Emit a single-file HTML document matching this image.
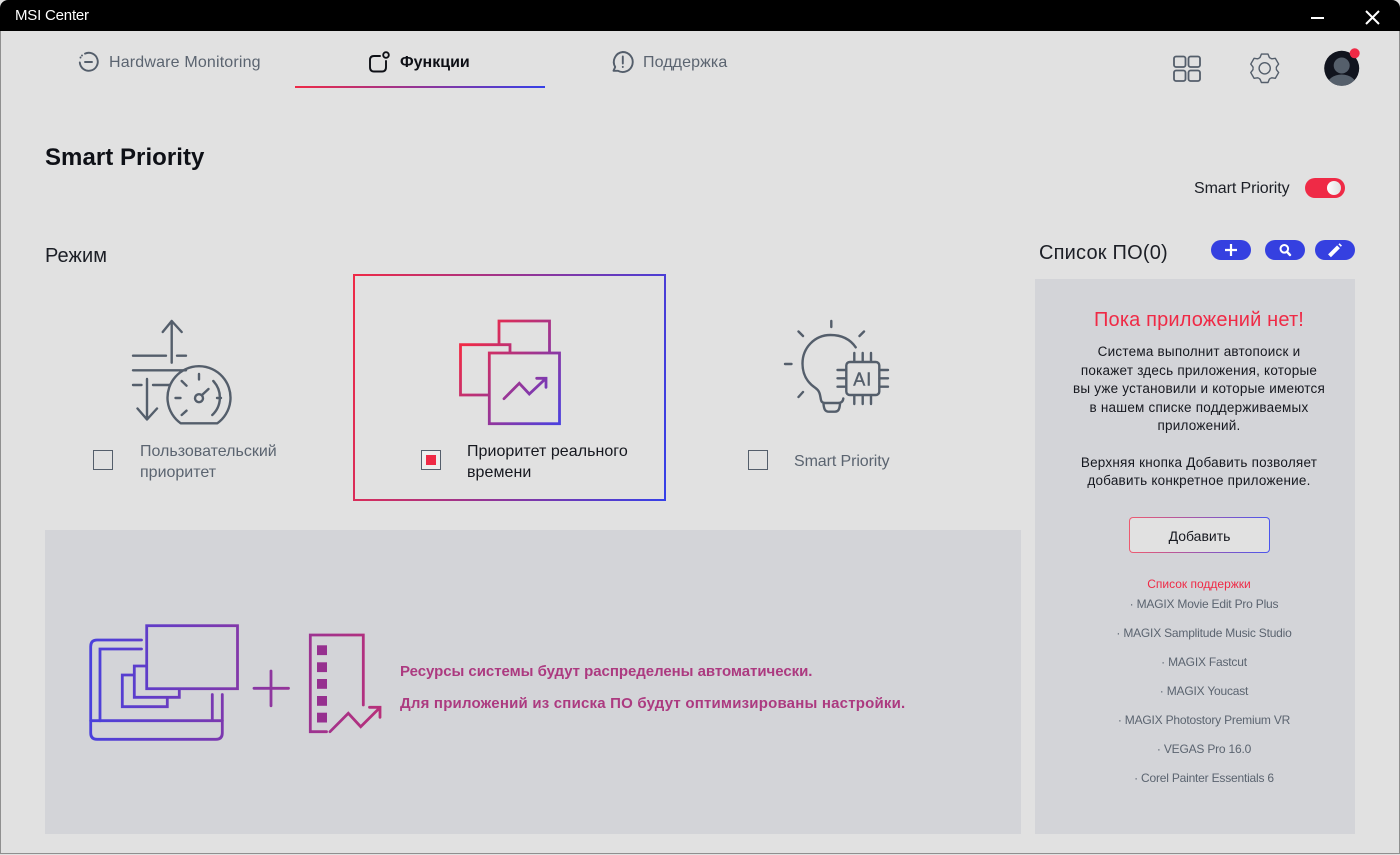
<!DOCTYPE html>
<html lang="ru">
<head>
<meta charset="utf-8">
<title>MSI Center</title>
<style>
html,body{margin:0;padding:0;width:1400px;height:855px;overflow:hidden;background:#e1e1e1}
body{position:relative;font-family:"Liberation Sans","Noto Sans CJK SC",sans-serif;color:#16181f}
.t{position:absolute;white-space:nowrap;line-height:24px;height:24px}
.c{text-align:center}
.b{position:absolute}
svg{position:absolute;left:0;top:0}
.p{font-size:13.5px;letter-spacing:.22px;left:1035px;width:328px;color:#16181f}
.l{font-size:12px;letter-spacing:-.2px;color:#5b6470;left:1040px;width:328px}
</style>
</head>
<body>
<div class="b" style="left:0;top:0;width:1400px;height:31px;background:#000;border-radius:8px 8px 0 0"></div>
<div class="b" style="left:0;top:31px;width:1px;height:822px;background:#8f8f8f"></div>
<div class="b" style="left:1399px;top:31px;width:1px;height:822px;background:#8f8f8f"></div>
<div class="b" style="left:0;top:853px;width:1400px;height:1px;background:#8f8f8f"></div>
<div class="t" style="left:15px;top:4px;color:#fff;font-size:15px;letter-spacing:-.2px">MSI Center</div>

<div class="t" style="left:109px;top:51px;font-size:16px;color:#5b6470;letter-spacing:.17px">Hardware Monitoring</div>
<div class="t" style="left:400px;top:51px;font-size:16px;font-weight:bold;color:#0e1016">Функции</div>
<div class="t" style="left:643px;top:51px;font-size:16px;color:#5b6470;letter-spacing:.1px">Поддержка</div>
<div class="b" style="left:295px;top:86px;width:250px;height:2px;background:linear-gradient(90deg,#ef2a46,#3540e8)"></div>

<div class="t" style="left:45px;top:145px;font-size:24px;font-weight:bold;line-height:26px;height:26px;color:#0e1016;letter-spacing:.05px">Smart Priority</div>
<div class="t" style="left:1194px;top:177px;font-size:16px;color:#1c1f26;letter-spacing:-.1px">Smart Priority</div>
<div class="b" style="left:1305px;top:178px;width:40px;height:20px;border-radius:10px;background:#ef2a46"></div>
<div class="b" style="left:1327px;top:181px;width:14px;height:14px;border-radius:50%;background:linear-gradient(90deg,#fff,#e0e0e0)"></div>

<div class="t" style="left:45px;top:244px;font-size:20px;color:#1c1f26;letter-spacing:.1px">Режим</div>
<div class="t" style="left:1039px;top:241px;font-size:20px;color:#1c1f26;letter-spacing:.2px">Список ПО(0)</div>
<div class="b" style="left:1211px;top:240px;width:40px;height:20px;border-radius:10px;background:#3540e0"></div>
<div class="b" style="left:1265px;top:240px;width:40px;height:20px;border-radius:10px;background:#3540e0"></div>
<div class="b" style="left:1315px;top:240px;width:40px;height:20px;border-radius:10px;background:#3540e0"></div>

<div class="b" style="left:1035px;top:279px;width:320px;height:555px;background:#d3d4d8"></div>
<div class="b" style="left:45px;top:530px;width:976px;height:304px;background:#d3d4d8"></div>

<div class="b" style="left:353px;top:274px;width:313px;height:227px;box-sizing:border-box;border:2px solid transparent;background:linear-gradient(#e1e1e1,#e1e1e1) padding-box,linear-gradient(100deg,#ef2a46,#3540e8) border-box"></div>

<div class="b" style="left:93px;top:450px;width:20px;height:20px;box-sizing:border-box;border:1.3px solid #545e6b"></div>
<div class="b" style="left:421px;top:450px;width:20px;height:20px;box-sizing:border-box;border:1.3px solid #545e6b;background:#eee"></div>
<div class="b" style="left:426px;top:455px;width:10px;height:10px;background:#ef2a46"></div>
<div class="b" style="left:748px;top:450px;width:20px;height:20px;box-sizing:border-box;border:1.3px solid #545e6b"></div>

<div class="t" style="left:140px;top:440px;font-size:16px;color:#5b6470">Пользовательский</div>
<div class="t" style="left:140px;top:461px;font-size:16px;color:#5b6470">приоритет</div>
<div class="t" style="left:467px;top:440px;font-size:16px;color:#16181f;letter-spacing:.05px">Приоритет реального</div>
<div class="t" style="left:467px;top:461px;font-size:16px;color:#16181f;letter-spacing:.05px">времени</div>
<div class="t" style="left:794px;top:450px;font-size:16px;color:#5b6470;letter-spacing:-.1px">Smart Priority</div>

<div class="t" style="left:400px;top:660px;font-size:15px;font-weight:bold;color:#ac3a80;letter-spacing:-.04px">Ресурсы системы будут распределены автоматически.</div>
<div class="t" style="left:400px;top:692px;font-size:15px;font-weight:bold;color:#ac3a80;letter-spacing:.2px">Для приложений из списка ПО будут оптимизированы настройки.</div>

<div class="t c" style="left:1035px;width:328px;top:308px;font-size:20px;color:#ef2a46;letter-spacing:.15px">Пока приложений нет!</div>
<div class="t c p" style="top:340px">Система выполнит автопоиск и</div>
<div class="t c p" style="top:359px">покажет здесь приложения, которые</div>
<div class="t c p" style="top:377px">вы уже установили и которые имеются</div>
<div class="t c p" style="top:396px">в нашем списке поддерживаемых</div>
<div class="t c p" style="top:414px">приложений.</div>
<div class="t c p" style="top:451px">Верхняя кнопка Добавить позволяет</div>
<div class="t c p" style="top:469px">добавить конкретное приложение.</div>

<div class="b" style="left:1129px;top:517px;width:141px;height:36px;box-sizing:border-box;border:1px solid transparent;border-radius:4px;background:linear-gradient(#e1e1e1,#e1e1e1) padding-box,linear-gradient(90deg,#ef5a70,#4a55ee) border-box"></div>
<div class="t c" style="left:1129px;width:141px;top:524px;font-size:14px">Добавить</div>

<div class="t c" style="left:1035px;width:328px;top:572px;font-size:12px;color:#ef2a46">Список поддержки</div>
<div class="t c l" style="top:592px">· MAGIX Movie Edit Pro Plus</div>
<div class="t c l" style="top:621px">· MAGIX Samplitude Music Studio</div>
<div class="t c l" style="top:650px">· MAGIX Fastcut</div>
<div class="t c l" style="top:679px">· MAGIX Youcast</div>
<div class="t c l" style="top:708px">· MAGIX Photostory Premium VR</div>
<div class="t c l" style="top:737px">· VEGAS Pro 16.0</div>
<div class="t c l" style="top:766px">· Corel Painter Essentials 6</div>

<svg width="1400" height="855" viewBox="0 0 1400 855" fill="none" xmlns="http://www.w3.org/2000/svg">
<defs>
<linearGradient id="g1" gradientUnits="userSpaceOnUse" x1="465" y1="345" x2="560" y2="424"><stop offset="0" stop-color="#ef2a46"/><stop offset="1" stop-color="#4a40e0"/></linearGradient>
<linearGradient id="g2" gradientUnits="userSpaceOnUse" x1="90" y1="680" x2="385" y2="680"><stop offset="0" stop-color="#4a40dc"/><stop offset="1" stop-color="#b92f78"/></linearGradient>
<clipPath id="av"><circle cx="1341.7" cy="68.3" r="17.5"/></clipPath>
</defs>

<!-- window controls -->
<path d="M1311 18H1324" stroke="#fff" stroke-width="2"/>
<path d="M1366 11L1379 24M1379 11L1366 24" stroke="#fff" stroke-width="2"/>

<!-- tab icons -->
<g stroke="#545e6b" stroke-width="1.9" stroke-linecap="round">
<path d="M85 53.6A9 9 0 1 1 79.8 62.5"/>
<path d="M80.5 57.5v.1M82 55.4v.1"/>
<path d="M85 62H92"/>
<path d="M622.8 52A10 10 0 1 1 618 70.8H613.5L615.2 67A10 10 0 0 1 622.8 52Z" stroke-linejoin="round"/>
<path d="M622.8 56.5V63.5M622.8 66.8V67"/>
</g>
<g stroke="#0e1016" stroke-width="1.9" stroke-linecap="round">
<path d="M380 56H374Q370 56 370 60V67Q370 71.5 374 71.5H382Q386 71.5 386 67V61"/>
<circle cx="386" cy="55" r="2.8"/>
</g>

<!-- header right icons -->
<g stroke="#545e6b" stroke-width="1.8">
<rect x="1174" y="56.5" width="11.5" height="10.5" rx="2"/>
<rect x="1188.5" y="56.5" width="11.5" height="10.5" rx="2"/>
<rect x="1174" y="70.5" width="11.5" height="10.5" rx="2"/>
<rect x="1188.5" y="70.5" width="11.5" height="10.5" rx="2"/>
</g>
<g transform="translate(1264.7 68.3)" stroke="#545e6b" stroke-width="1.4" stroke-linejoin="round">
<circle r="5.6"/>
<path d="M-5.75-9.96L-4.6-11L-3.3-14.2L3.3-14.2L4.6-11L5.75-9.96"/>
<path transform="rotate(60)" d="M-5.75-9.96L-4.6-11L-3.3-14.2L3.3-14.2L4.6-11L5.75-9.96"/>
<path transform="rotate(120)" d="M-5.75-9.96L-4.6-11L-3.3-14.2L3.3-14.2L4.6-11L5.75-9.96"/>
<path transform="rotate(180)" d="M-5.75-9.96L-4.6-11L-3.3-14.2L3.3-14.2L4.6-11L5.75-9.96"/>
<path transform="rotate(240)" d="M-5.75-9.96L-4.6-11L-3.3-14.2L3.3-14.2L4.6-11L5.75-9.96"/>
<path transform="rotate(300)" d="M-5.75-9.96L-4.6-11L-3.3-14.2L3.3-14.2L4.6-11L5.75-9.96"/>
</g>
<circle cx="1341.7" cy="68.3" r="17.5" fill="#11141e"/>
<g clip-path="url(#av)" fill="#555f6b">
<circle cx="1341.7" cy="65.5" r="8"/>
<ellipse cx="1341.7" cy="86" rx="15" ry="11.5"/>
</g>
<circle cx="1354.7" cy="53.3" r="5" fill="#ef2a46"/>

<!-- pill icons -->
<path d="M1225 250H1237M1231 244V256" stroke="#fff" stroke-width="2.2"/>
<circle cx="1284.3" cy="248.8" r="3.8" stroke="#fff" stroke-width="2"/>
<path d="M1287 251.8L1290 255" stroke="#fff" stroke-width="2.4" stroke-linecap="round"/>
<path d="M1329.5 255.8L1338.5 246.8" stroke="#fff" stroke-width="4"/>
<path d="M1339.6 245.6L1340.8 244.4" stroke="#fff" stroke-width="3.4"/>

<!-- icon 1 -->
<g stroke="#545e6b" stroke-width="2.4" stroke-linecap="round" stroke-linejoin="round">
<path d="M171.7 321V362.7M162.7 332L171.7 321L181.7 332"/>
<path d="M133 355.7H166M177 355.7H186"/>
<path d="M133 370.3H186"/>
<path d="M133 385H141.5M153 385H170"/>
<path d="M147 379V419.5M137.5 408.5L147 419.5L157 408.5"/>
<path d="M180.7 423.3A31.5 31.5 0 1 1 217.3 423.3Z"/>
<path d="M199 374V379.5M181.7 381L186.5 385.7M175.5 398H180.5M181.7 415L186.5 410.7M217 398H221"/>
<path d="M213.3 381A24 24 0 0 1 212.3 415"/>
<circle cx="199" cy="398.2" r="4"/>
<path d="M202 395L208.5 389"/>
</g>

<!-- icon 2 -->
<g stroke="url(#g1)" stroke-width="2.8" stroke-linecap="square" stroke-linejoin="miter">
<path d="M499 344V321H549.5V352"/>
<path d="M489 395H460.5V344.7H510V352"/>
<rect x="489.3" y="353" width="70.2" height="70.7"/>
<path d="M504 398.7L519.3 383.3L529.3 394L546 378.3M536.7 378.3H546V387.3" stroke-linecap="round"/>
</g>

<!-- icon 3 -->
<g stroke="#545e6b" stroke-width="2.4" stroke-linecap="round" stroke-linejoin="round">
<path d="M831.3 321V327M798.5 331.5L803 336M864 331.5L859.5 336M785 364H791.5M803 392L798.5 397"/>
<path d="M855.7 347.3C850 339 841 335 830.5 335C814.5 335 802.5 348 802.5 363.5C802.5 375 808 383 815.5 388C820.5 391.5 820 396 821 400C821.5 402.5 823 403 825 403H838C841.5 403 843 401.5 843.3 398.5"/>
<path d="M823.5 404C824 409 825 411.7 829 411.7H835C838.5 411.7 839.5 409 840 404"/>
<rect x="846.3" y="362" width="33" height="33" rx="3.5"/>
<path d="M854.3 353V361.5M862.7 353V361.5M871 353V361.5M854.3 395.5V404M862.7 395.5V404M871 395.5V404M837.5 370H846M837.5 378.3H846M837.5 386.7H846M879.5 370H888M879.5 378.3H888M879.5 386.7H888"/>
</g>
<text x="862.7" y="385.5" text-anchor="middle" font-family="Liberation Sans,sans-serif" font-size="18" letter-spacing="1" fill="#545e6b" stroke="#545e6b" stroke-width=".4">AI</text>

<!-- bottom illustration -->
<g stroke="url(#g2)" stroke-width="2.8" stroke-linecap="round">
<rect x="146.7" y="625.7" width="90.8" height="63"/>
<path d="M141.5 640H97Q90.7 640 90.7 646.5V733Q90.7 739.3 97 739.3H216Q222.3 739.3 222.3 733V694.5"/>
<path d="M141.5 649H100V720.7"/>
<path d="M90.7 720.7H222.3M212.3 694.5V720.7"/>
<path d="M146.5 666H134.3V697.3H179.3V689"/>
<path d="M134 675H122.3V706.7H167.3V697.5"/>
<path d="M254 688.3H288.5M271 671V705.7"/>
<path d="M326.5 731.7H310.3V635H363.3V705"/>
<path d="M330 731.7L348.3 713.3L360.7 726.7L380 707.5M369.5 707.3H380V717.3"/>
</g>
<g fill="#96308f">
<rect x="317" y="645.3" width="10" height="9.8"/>
<rect x="317" y="662.3" width="10" height="9.8"/>
<rect x="317" y="679" width="10" height="9.8"/>
<rect x="317" y="696" width="10" height="9.8"/>
<rect x="317" y="712.7" width="10" height="9.8"/>
</g>
</svg>
</body>
</html>
